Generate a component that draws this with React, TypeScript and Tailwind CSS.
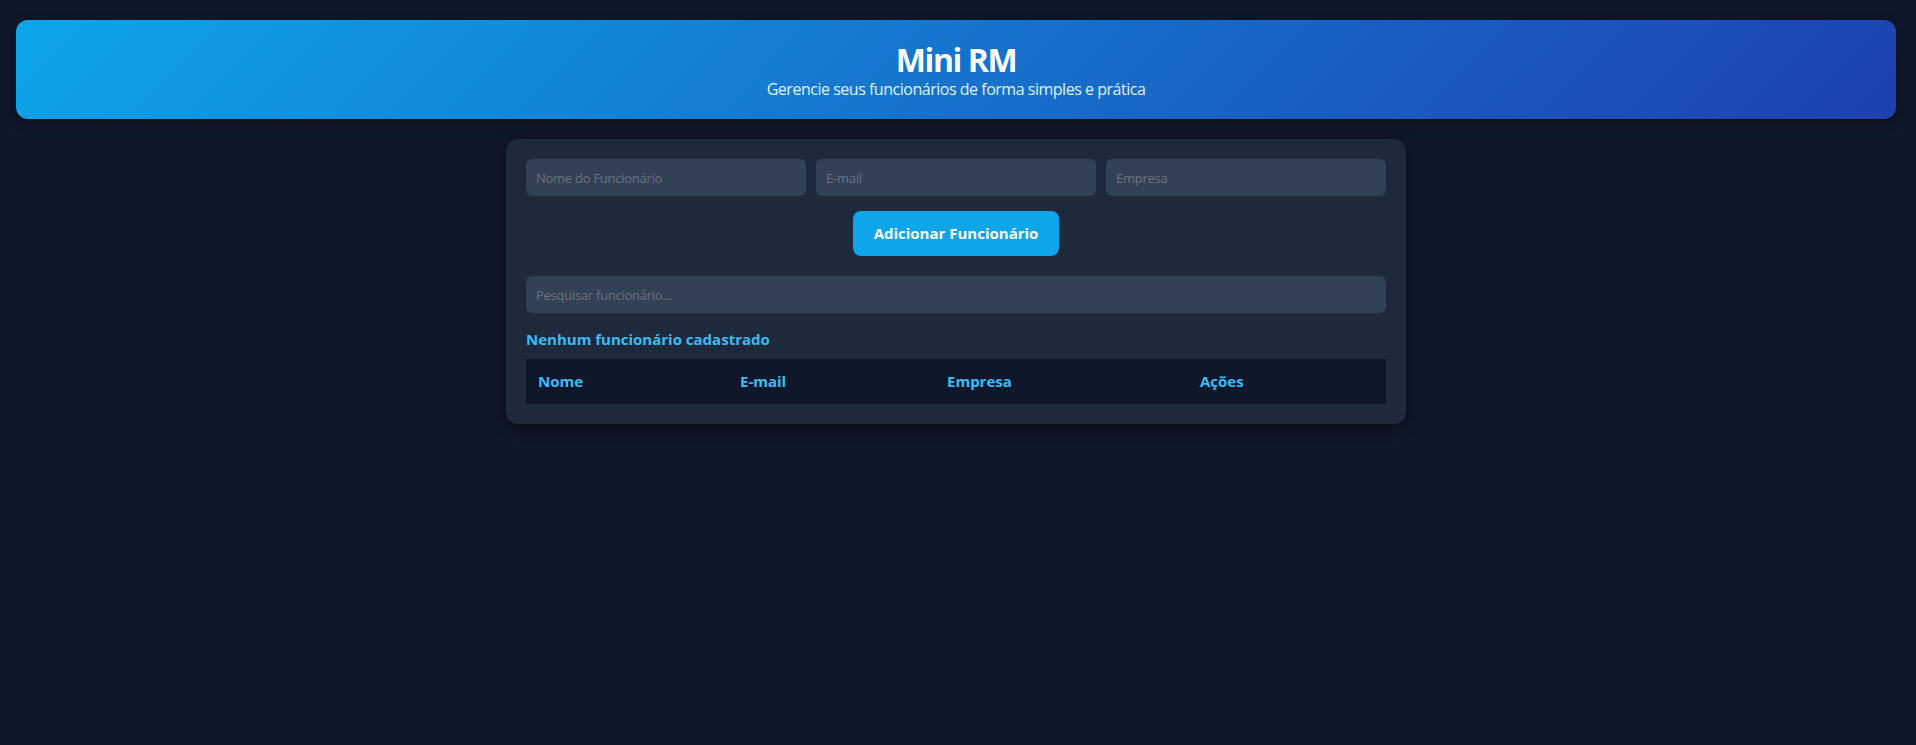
import React from "react";

export default function App() {
  return (
    <div className="min-h-screen bg-[#0f172a] pl-4 pr-5 pt-5 font-['Open_Sans','Noto_Sans',sans-serif] text-white">
      <header className="rounded-xl bg-[linear-gradient(135deg,#0ea5e9,#1e40af)] pb-[19px] pt-[21px] text-center shadow-[0_4px_12px_rgba(0,0,0,0.35)]">
        <h1 className="text-[32px] font-bold leading-[38px] tracking-[-0.045em]">Mini RM</h1>
        <p className="text-[16px] leading-[21px] tracking-[-0.03em] text-[#e0f2fe]">
          Gerencie seus funcionários de forma simples e prática
        </p>
      </header>

      <main className="mx-auto mt-5 w-[900px] rounded-xl bg-[#1e293b] p-5 shadow-[0_4px_14px_rgba(0,0,0,0.45)]">
        <div className="grid grid-cols-3 gap-[10px]">
          <input
            placeholder="Nome do Funcionário"
            className="h-[37px] rounded-md bg-[#334155] px-[10px] text-[13px] tracking-[-0.02em] text-white outline-none placeholder:text-[#6b7280]"
          />
          <input
            placeholder="E-mail"
            className="h-[37px] rounded-md bg-[#334155] px-[10px] text-[13px] tracking-[-0.02em] text-white outline-none placeholder:text-[#6b7280]"
          />
          <input
            placeholder="Empresa"
            className="h-[37px] rounded-md bg-[#334155] px-[10px] text-[13px] tracking-[-0.02em] text-white outline-none placeholder:text-[#6b7280]"
          />
        </div>

        <div className="mt-[15px] flex justify-center">
          <button className="h-[45px] w-[206px] rounded-lg bg-[#0ea5e9] text-[15px] font-bold text-white">
            Adicionar Funcionário
          </button>
        </div>

        <input
          placeholder="Pesquisar funcionário..."
          className="mt-5 block h-[37px] w-full rounded-md bg-[#334155] px-[10px] text-[13px] tracking-[-0.02em] text-white outline-none placeholder:text-[#6b7280]"
        />

        <h3 className="mb-[10px] mt-[16px] text-[15px] font-bold leading-5 text-[#38bdf8]">
          Nenhum funcionário cadastrado
        </h3>

        <table className="w-full border-collapse text-left">
          <thead>
            <tr className="bg-[#0f172a] text-[15px] font-bold text-[#38bdf8]">
              <th className="h-[45px] w-[202px] px-3">Nome</th>
              <th className="h-[45px] w-[207px] px-3">E-mail</th>
              <th className="h-[45px] w-[253px] px-3">Empresa</th>
              <th className="h-[45px] px-3">Ações</th>
            </tr>
          </thead>
          <tbody></tbody>
        </table>
      </main>
    </div>
  );
}
